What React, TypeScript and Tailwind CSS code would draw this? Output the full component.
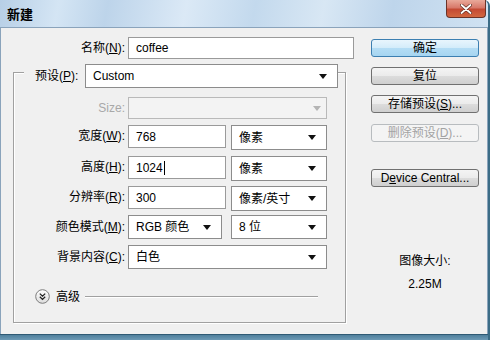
import React from 'react';

const Arrow = ({ disabled }: { disabled?: boolean }) => (
  <svg width="8" height="5" viewBox="0 0 8 5">
    <path d="M0 0H8L4 5Z" fill={disabled ? '#b4b4b4' : '#111'} />
  </svg>
);

const U = ({ c }: { c: string }) => <span className="underline">{c}</span>;

const Input = ({ value, className, caret }: { value: string; className: string; caret?: boolean }) => (
  <div className={`flex items-center bg-white border border-[#9a9a9a] pl-[7px] text-[12px] text-black ${className}`}>
    {value}
    {caret && <span className="w-px h-[14px] bg-black ml-px" />}
  </div>
);

const Select = ({ value, className }: { value: string; className: string }) => (
  <div className={`flex items-center justify-between bg-white border border-[#8c8c8c] pl-[7px] pr-[10px] text-[12px] text-black ${className}`}>
    <span>{value}</span>
    <Arrow />
  </div>
);

const Button = ({ children, kind }: { children: React.ReactNode; kind?: 'default' | 'disabled' }) => {
  const style =
    kind === 'default'
      ? 'border-[#3c7fb1] bg-[linear-gradient(#e8f5fd_0%,#d3ecfa_50%,#b4ddf5_51%,#a6d5f1_100%)] text-black'
      : kind === 'disabled'
      ? 'border-[#b8bcbf] bg-[#f4f4f4] text-[#a3a3a3]'
      : 'border-[#707070] bg-[linear-gradient(#f4f4f4_0%,#ebebeb_50%,#dcdcdc_51%,#cfcfcf_100%)] text-black';
  return (
    <div className={`w-[108px] h-[18px] flex items-center justify-center rounded-[3px] border text-[12px] ${style}`}>
      {children}
    </div>
  );
};

const Label = ({ children, className, muted }: { children: React.ReactNode; className: string; muted?: boolean }) => (
  <div className={`text-right pr-[3px] text-[12px] ${muted ? 'text-[#a8a8a8]' : 'text-black'} ${className}`}>{children}</div>
);

export default function App() {
  return (
    <div className="w-[495px] h-[340px] bg-white overflow-hidden font-['Liberation_Sans','Noto_Sans_CJK_SC',sans-serif]">
      <div className="w-[490px] h-[340px] flex flex-col rounded-tr-[6px] bg-[#c4d9ed] border-r-2 border-[#3b6c86]">
        {/* title bar */}
        <div className="h-[27px] flex items-start justify-between shrink-0 rounded-tr-[6px] bg-[linear-gradient(100deg,#b7cfe6_0%,#d4e5f4_12%,#bdd4ea_22%,#dbe9f6_38%,#c3d9ed_52%,#d8e7f4_66%,#bed5eb_80%,#d0e2f2_100%)]">
          <div className="pl-[7px] pt-[6px] text-[13px] font-bold text-black leading-[18px]">新建</div>
          <div className="mr-[2px] w-[40px] h-[18px] rounded-b-[4px] border border-t-0 border-[#6b3328] bg-[linear-gradient(#e9a99a_0%,#d8796a_45%,#c44a34_55%,#d2673f_100%)] flex items-center justify-center">
            <svg width="12" height="10" viewBox="0 0 12 10">
              <path d="M1.5 1L10.5 9M10.5 1L1.5 9" stroke="#5a2a20" strokeWidth="3.2" strokeLinecap="round" />
              <path d="M1.5 1L10.5 9M10.5 1L1.5 9" stroke="#ffffff" strokeWidth="1.8" strokeLinecap="round" />
            </svg>
          </div>
        </div>

        {/* client */}
        <div className="flex-1 flex bg-[#f0f0f0] border-t border-l border-r border-[#8aa3bb]">
          <div className="w-[359px] flex flex-col">
            <div className="mt-[9px] flex h-[22px] items-center">
              <Label className="w-[127px]">
                名称(<U c="N" />):
              </Label>
              <Input value="coffee" className="w-[226px] h-[22px]" />
            </div>

            <div className="mt-[13px] ml-[12px] w-[333px] h-[251px] border border-[#a0a0a0] shadow-[inset_1px_1px_0_#ffffff,1px_1px_0_#ffffff] flex flex-col">
              <div className="-mt-[9px] flex items-center h-[24px]">
                <div className="ml-[10px] w-[61px] pl-[11px] bg-[#f0f0f0] text-[12px] text-black h-[16px] leading-[16px]">
                  预设(<U c="P" />):
                </div>
                <Select value="Custom" className="w-[253px] h-[24px]" />
              </div>

              <div className="mt-[9px] flex items-center h-[22px]">
                <Label className="w-[114px]" muted>
                  Size:
                </Label>
                <div className="w-[199px] h-[22px] bg-[#f3f3f3] border border-[#b9b9b9] flex items-center justify-end pr-[5px]">
                  <Arrow disabled />
                </div>
              </div>

              <div className="mt-[6px] flex items-start h-[23px]">
                <Label className="w-[114px] leading-[23px]">
                  宽度(<U c="W" />):
                </Label>
                <Input value="768" className="w-[98px] h-[23px]" />
                <Select value="像素" className="ml-[5px] w-[96px] h-[25px]" />
              </div>

              <div className="mt-[8px] flex items-start h-[23px]">
                <Label className="w-[114px] leading-[23px]">
                  高度(<U c="H" />):
                </Label>
                <Input value="1024" caret className="w-[98px] h-[23px]" />
                <Select value="像素" className="ml-[5px] w-[96px] h-[25px]" />
              </div>

              <div className="mt-[7px] flex items-start h-[23px]">
                <Label className="w-[114px] leading-[23px]">
                  分辨率(<U c="R" />):
                </Label>
                <Input value="300" className="w-[98px] h-[23px]" />
                <Select value="像素/英寸" className="ml-[5px] w-[96px] h-[25px]" />
              </div>

              <div className="mt-[6px] flex items-center h-[24px]">
                <Label className="w-[114px]">
                  颜色模式(<U c="M" />):
                </Label>
                <Select value="RGB 颜色" className="w-[94px] h-[24px]" />
                <Select value="8 位" className="ml-[9px] w-[96px] h-[24px]" />
              </div>

              <div className="mt-[6px] flex items-center h-[24px]">
                <Label className="w-[114px]">
                  背景内容(<U c="C" />):
                </Label>
                <Select value="白色" className="w-[199px] h-[24px]" />
              </div>

              <div className="mt-[20px] ml-[21px] flex items-center h-[15px]">
                <svg width="15" height="15" viewBox="0 0 15 15">
                  <defs>
                    <linearGradient id="cg" x1="0" y1="0" x2="0" y2="1">
                      <stop offset="0" stopColor="#ffffff" />
                      <stop offset="1" stopColor="#dcdcdc" />
                    </linearGradient>
                  </defs>
                  <circle cx="7.5" cy="7.5" r="6.8" fill="url(#cg)" stroke="#7c7c7c" strokeWidth="1" />
                  <path d="M4.8 4.6L7.5 7.2L10.2 4.6M4.8 7.8L7.5 10.4L10.2 7.8" fill="none" stroke="#222" strokeWidth="1.3" />
                </svg>
                <span className="ml-[6px] text-[12px] text-black">高级</span>
                <div className="ml-[5px] w-[233px] h-px bg-[#a0a0a0] shadow-[0_1px_0_#ffffff]" />
              </div>
            </div>
          </div>

          <div className="ml-[11px] flex flex-col items-center w-[108px]">
            <div className="mt-[11px]">
              <Button kind="default">确定</Button>
            </div>
            <div className="mt-[10px]">
              <Button>复位</Button>
            </div>
            <div className="mt-[10px]">
              <Button>
                存储预设(<U c="S" />)...
              </Button>
            </div>
            <div className="mt-[11px]">
              <Button kind="disabled">
                删除预设(<U c="D" />)...
              </Button>
            </div>
            <div className="mt-[27px]">
              <Button>
                D<U c="e" />vice Central...
              </Button>
            </div>
            <div className="mt-[66px] text-[12px] text-black leading-[16px]">图像大小:</div>
            <div className="mt-[7px] text-[12px] text-black leading-[16px]">2.25M</div>
          </div>
        </div>

        {/* bottom frame */}
        <div className="h-[6px] shrink-0 border-t border-[#2f5a74] bg-[linear-gradient(#4f7f9c,#6d9ab5)]" />
      </div>
    </div>
  );
}
